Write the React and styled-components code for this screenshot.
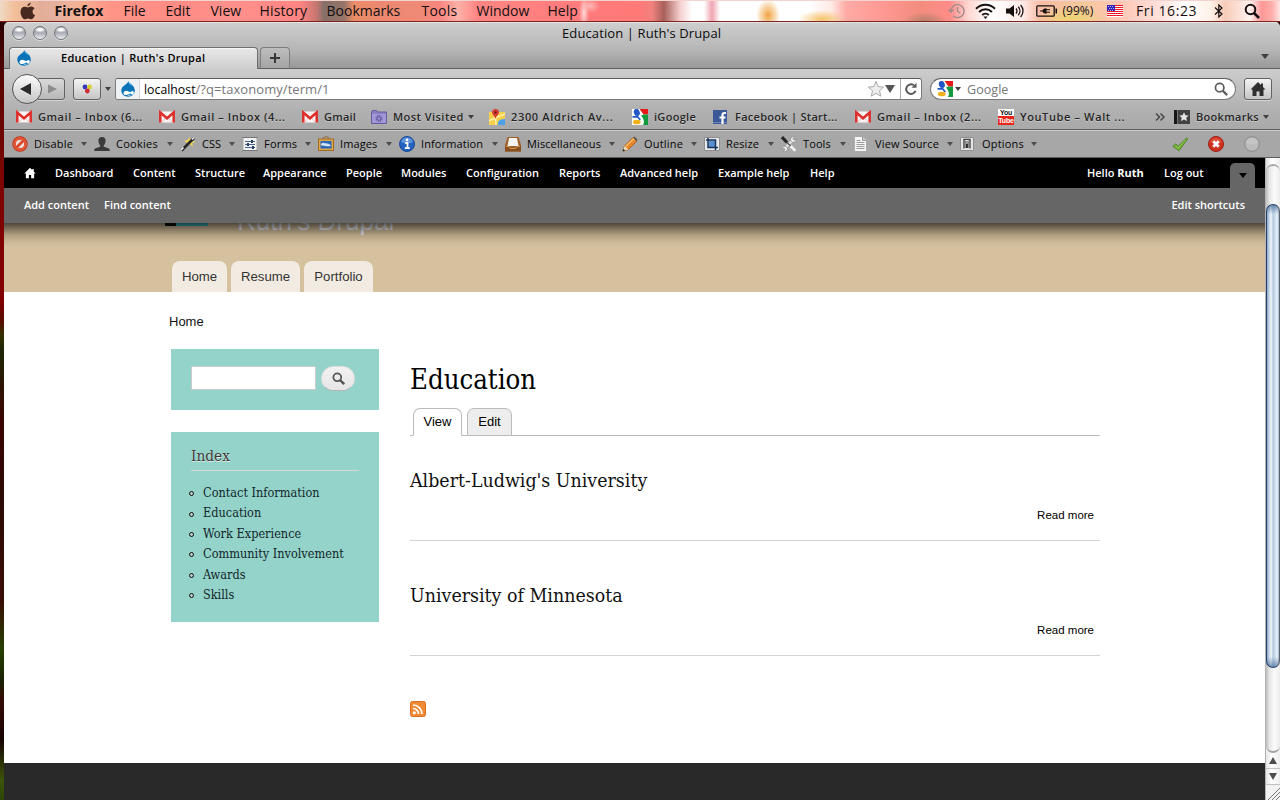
import React from 'react';
import styled, { createGlobalStyle } from 'styled-components';

const Global = createGlobalStyle`
  *, *::before, *::after { box-sizing: border-box; }
  body { margin: 0; overflow: hidden; }
  svg { display: block; flex: none; }
`;

const ui = '"Open Sans", "Noto Sans", sans-serif';
const serif = '"DejaVu Serif Condensed", "DejaVu Serif", serif';
const sans = '"Liberation Sans", Arial, sans-serif';

const Desktop = styled.div`
  width: 1280px;
  height: 800px;
  overflow: hidden;
  display: flex;
  flex-direction: column;
  font-family: ${ui};
  white-space: nowrap;
  background: linear-gradient(180deg, #2a0000 20px, #5e0703 90px, #7d0500 180px, #820000 300px, #5a0a00 320px, #353100 335px, #1d2606 350px, #3c0400 420px, #2c0a05 500px, #3a0d06 600px, #254000 650px, #1a2205 680px, #360a05 700px, #160404 740px, #3c5508 780px, #2d4506 800px);
`;

/* ---- system menu bar ---- */
const MenuBar = styled.header`
  height: 22px;
  flex: none;
  display: flex;
  align-items: center;
  padding: 0 0 1px 20px;
  border-bottom: 1px solid #7c2420;
  border-top: 1px solid #f4d2cd;
  font-size: 14px;
  line-height: 20px;
  color: #141010;
  background:
    radial-gradient(ellipse 10px 7px at 590px 5px, #ffb9b5, transparent),
    radial-gradient(ellipse 5px 18px at 584px 12px, #ffd9d6, transparent),
    radial-gradient(ellipse 12px 16px at 768px 14px, #f0a443, transparent),
    radial-gradient(ellipse 24px 9px at 822px 18px, #f5c368, transparent),
    radial-gradient(ellipse 34px 12px at 1070px 18px, #eed470, transparent),
    radial-gradient(ellipse 22px 9px at 925px 20px, #b5806d, transparent),
    linear-gradient(90deg, #efd9c5 0, #f3c09a 14px, #e3ae98 40px, #e5b09e 58px, #f5b295 78px, #ff9587 110px, #ff8b85 180px, #ff918c 230px, #ff8583 300px, #c97770 316px, #86706a 324px, #967467 344px, #ec8d68 354px, #ec8870 380px, #ee8a76 420px, #f78580 440px, #ffb0a8 458px, #ff8583 478px, #ff7c7c 580px, #ff7977 640px, #f0827e 652px, #a8605a 664px, #f5cfcf 680px, #fff 692px, #fff 704px, #f0a5b2 712px, #fff 720px, #fff 755px, #fff 810px, #ffe8e4 832px, #ffaaa5 846px, #ff9a94 880px, #f28c7e 920px, #ff8c88 950px, #ffd6d1 968px, #fff 990px, #ffecea 1022px, #f8bca4 1040px, #f4c89b 1080px, #ffc6b4 1120px, #ffe1dc 1160px, #fff 1185px, #fff1e9 1210px, #f8cbb8 1225px, #fff2ef 1250px, #ff9794 1262px, #ffafac 1272px, #ffe6e3 1280px);
`;
const MenuItem = styled.span`
  flex: none;
  width: ${(p) => p.$w}px;
  font-weight: ${(p) => (p.$bold ? 700 : 400)};
  font-size: ${(p) => p.$size || 14}px;
  letter-spacing: ${(p) => p.$ls || 0}px;
`;

/* ---- browser window ---- */
const Window = styled.div`
  flex: 1;
  min-height: 0;
  margin-left: 4px;
  display: flex;
  flex-direction: column;
  border-radius: 5px 5px 0 0;
  overflow: hidden;
  background: #a7a7a7;
`;
const Chrome = styled.div`
  flex: none;
  height: 47px;
  padding-top: 1px;
  background: linear-gradient(#cfcfcf, #b5b5b5 60%, #979797);
  box-shadow: inset 0 1px #e4e4e4, inset 0 -1px #5f5f5f;
`;
const TitleBar = styled.div`
  height: 20px;
  display: flex;
  align-items: center;
  padding-left: 8px;
`;
const Lights = styled.div`
  display: flex;
  gap: 7px;
  width: 550px;
`;
const Light = styled.i`
  width: 14px;
  height: 14px;
  border-radius: 50%;
  border: 1px solid #74777f;
  background: radial-gradient(ellipse 6px 3px at 50% 22%, #fff 30%, transparent), linear-gradient(#8c909a, #b0b3bb 55%, #eceef2);
  box-shadow: 0 1px #dcdcdc;
`;
const WindowTitle = styled.div`
  font-size: 13px;
  letter-spacing: 0.11px;
  line-height: 20px;
  color: #0c0c0c;
`;
const TabStrip = styled.div`
  display: flex;
  height: 26px;
  padding-top: 4px;
  padding-left: 5px;
`;
const Tab = styled.div`
  width: 249px;
  height: 22px;
  display: flex;
  align-items: center;
  padding-left: 6px;
  padding-bottom: 1px;
  gap: 29px;
  font-size: 11px;
  font-weight: 600;
  line-height: 18px;
  letter-spacing: 0.29px;
  color: #000;
  border: 1px solid #6f6f6f;
  border-bottom: 0;
  border-radius: 4px 4px 0 0;
  background: linear-gradient(#e9e9e9, #cdcdcd);
  box-shadow: inset 0 1px #f6f6f6;
`;
const NewTab = styled.div`
  width: 30px;
  height: 22px;
  margin-left: 2px;
  display: flex;
  align-items: center;
  justify-content: center;
  border: 1px solid #7d7d7d;
  border-bottom-color: #5f5f5f;
  border-radius: 4px 4px 0 0;
  background: linear-gradient(#bebebe, #a4a4a4);
`;
const TabListArrow = styled.div`
  margin: 7px 11px 0 auto;
`;
const NavBar = styled.div`
  flex: none;
  height: 40px;
  display: flex;
  align-items: center;
  padding-left: 8px;
  background: linear-gradient(#cdcdcd, #b1b1b1);
`;
const BackButton = styled.div`
  width: 30px;
  height: 30px;
  border-radius: 50%;
  border: 1px solid #555;
  background: linear-gradient(#fcfcfc, #c6c6c6);
  display: flex;
  align-items: center;
  justify-content: center;
  padding-right: 2px;
  z-index: 1;
`;
const ToolButton = styled.div`
  width: ${(p) => p.$w}px;
  height: 22px;
  margin-left: ${(p) => p.$ml}px;
  padding-left: ${(p) => p.$pl || 0}px;
  border: 1px solid #626262;
  border-radius: 3px;
  background: linear-gradient(${(p) => (p.$dim ? '#d9d9d9, #b8b8b8' : '#f4f4f4, #c5c5c5')});
  box-shadow: 0 1px #d4d4d4;
  display: flex;
  align-items: center;
  justify-content: center;
`;
const Field = styled.div`
  height: 22px;
  background: #fff;
  border: 1px solid #7b7b7b;
  border-top-color: #5c5c5c;
  border-radius: ${(p) => (p.$round ? 11 : 3)}px;
  width: ${(p) => p.$w}px;
  margin-left: ${(p) => p.$ml}px;
  padding-left: ${(p) => p.$pl || 0}px;
  display: flex;
  align-items: center;
  font-size: 13px;
  line-height: 18px;
  color: #777;
  overflow: hidden;
`;
const SiteBadge = styled.div`
  width: 24px;
  height: 20px;
  padding: 2px 0 0 4px;
  margin-right: 4px;
  background: #eef1f3;
  border-right: 1px solid #d5d5d5;
`;
const Address = styled.div`
  padding-top: 1px;
  letter-spacing: 0.06px;
`;
const Placeholder = styled.div`
  font-size: 12.6px;
  padding-top: 1px;
`;
const Host = styled.span`
  color: #000;
  font-size: 12.3px;
  letter-spacing: 0;
`;
const FieldEnd = styled.div`
  margin-left: auto;
  padding-right: ${(p) => p.$pr || 0}px;
  display: flex;
  align-items: center;
  height: 20px;
`;
const Reload = styled.div`
  width: 21px;
  height: 20px;
  margin-left: 5px;
  border-left: 1px solid #aaa;
  display: flex;
  align-items: center;
  justify-content: center;
`;
const Bar = styled.div`
  flex: none;
  display: flex;
  align-items: center;
  height: ${(p) => p.$h}px;
  padding-left: ${(p) => p.$pl}px;
  padding-bottom: ${(p) => p.$pb || 0}px;
  background: ${(p) => p.$bg};
  border-top: ${(p) => (p.$line ? '1px solid #cdcdcd' : '0')};
  border-bottom: 1px solid #5d5d5d;
`;
const Bookmark = styled.div`
  flex: none;
  width: ${(p) => p.$w}px;
  display: flex;
  align-items: center;
  font-size: 11px;
  line-height: 16px;
  font-weight: 600;
  color: #262626;
  text-shadow: 0 1px rgba(255, 255, 255, 0.35);
  letter-spacing: ${(p) => p.$ls}px;
  svg { margin-right: 6px; }
`;
const DevTool = styled.div`
  flex: none;
  width: ${(p) => p.$w}px;
  display: flex;
  align-items: center;
  font-size: 11px;
  line-height: 16px;
  letter-spacing: ${(p) => p.$ls}px;
  color: #060606;
  svg { margin-right: 6px; }
`;
const Arrow = styled.i`
  flex: none;
  width: 0;
  height: 0;
  border: ${(p) => p.$s || 3}px solid transparent;
  border-top: ${(p) => (p.$s || 3) + 1}px solid ${(p) => p.$color || '#404040'};
  border-bottom: 0;
  margin: ${(p) => p.$m || '0'};
`;

/* ---- page viewport ---- */
const Viewport = styled.div`
  flex: 1;
  min-height: 0;
  display: flex;
`;
const Page = styled.div`
  width: 1261px;
  display: flex;
  flex-direction: column;
  background: #fff;
`;
const Toolbar = styled.div`
  flex: none;
  position: relative;
  z-index: 2;
  color: #fff;
  font-size: 11px;
  line-height: 16px;
  font-weight: 600;
  &::after {
    content: '';
    position: absolute;
    left: 0;
    right: 0;
    top: 100%;
    height: 24px;
    background: linear-gradient(rgba(0, 0, 0, 0.64), rgba(0, 0, 0, 0.4) 25%, rgba(0, 0, 0, 0.17) 52%, rgba(0, 0, 0, 0.05) 78%, transparent);
  }
`;
const AdminMenu = styled.nav`
  height: 30px;
  display: flex;
  align-items: center;
  background: #000;
  padding-left: 20px;
`;
const AdminLink = styled.a`
  flex: none;
  width: ${(p) => p.$w}px;
  b { font-weight: 700; }
`;
const ShortcutToggle = styled.div`
  align-self: flex-end;
  width: 25px;
  height: 25px;
  background: #666;
  border-radius: 5px 5px 0 0;
  display: flex;
  align-items: center;
  justify-content: center;
`;
const Shortcuts = styled.div`
  height: 35px;
  display: flex;
  align-items: center;
  gap: 15px;
  padding: 0 20px 1px;
  background: #666;
  a:last-child { margin-left: auto; }
`;
const SiteHeader = styled.div`
  flex: none;
  height: 69px;
  background: #d6c19e;
  display: flex;
  flex-direction: column;
  justify-content: space-between;
`;
const Branding = styled.div`
  display: flex;
  align-items: flex-end;
  height: 38px;
  margin-top: -24px;
  padding-left: 161px;
`;
const Logo = styled.div`
  width: 43px;
  height: 24px;
  margin-bottom: 11px;
  background: linear-gradient(90deg, #0a0a0a 11px, #3cc3d2 11px);
`;
const SiteName = styled.div`
  margin-left: 29px;
  font: 26px/32px ${sans};
  letter-spacing: 0.05px;
  color: #f4f4ff;
`;
const MainMenu = styled.nav`
  display: flex;
  gap: 4px;
  padding-left: 168px;
`;
const MenuTab = styled.a`
  width: ${(p) => p.$w}px;
  height: 31px;
  text-align: center;
  font: 13.2px/31px ${sans};
  color: #333;
  background: #f2ebe1;
  border-radius: 8px 8px 0 0;
`;
const Breadcrumb = styled.div`
  font: 13px/20px ${sans};
  color: #111;
  padding: 20px 0 0 165px;
  height: 57px;
  flex: none;
`;
const Columns = styled.div`
  display: flex;
  gap: 31px;
  padding-left: 167px;
  flex: 1;
`;
const Sidebar = styled.aside`
  width: 208px;
  display: flex;
  flex-direction: column;
  gap: 22px;
`;
const Block = styled.section`
  height: ${(p) => p.$h}px;
  padding: 0 20px;
  background: #93d3c9;
`;
const SearchForm = styled.div`
  display: flex;
  gap: 5px;
  padding-top: 17px;
`;
const SearchInput = styled.div`
  width: 125px;
  height: 24px;
  background: #fff;
  border: 1px solid #ccc;
`;
const SearchButton = styled.div`
  width: 34px;
  height: 25px;
  border-radius: 13px;
  border: 1px solid #dcdcdc;
  border-bottom-color: #b4b4b4;
  background: linear-gradient(#f1f1f1, #e6e6e6);
  display: flex;
  align-items: center;
  justify-content: center;
`;
const BlockTitle = styled.h2`
  margin: 0;
  height: 39px;
  padding-top: 12px;
  font: 15.3px/24px ${serif};
  color: #3b3b3b;
  text-shadow: 0 1px #e6e6e0;
  border-bottom: 1px solid #d6d6d6;
`;
const IndexList = styled.ul`
  list-style: none;
  margin: 12px 0 0 -2px;
  padding: 0;
`;
const IndexItem = styled.li`
  display: flex;
  align-items: center;
  gap: 9px;
  font: 12.6px/20.4px ${serif};
  color: #14272c;
  &::before {
    content: '';
    flex: none;
    width: 5px;
    height: 5px;
    margin-top: 1px;
    border: 1px solid #111;
    background: #b9ccc8;
    border-radius: 50%;
  }
`;
const Main = styled.main`
  width: 690px;
`;
const PageTitle = styled.h1`
  margin: 0;
  padding-top: 13px;
  height: 59px;
  font: 27.3px/36px ${serif};
  color: #000;
`;
const LocalTabs = styled.div`
  height: 28px;
  display: flex;
  gap: 5px;
  padding-left: 3px;
  box-shadow: inset 0 -1px #bbb;
`;
const LocalTab = styled.a`
  width: ${(p) => p.$w}px;
  height: 28px;
  border: 1px solid #bbb;
  border-bottom-color: ${(p) => (p.$active ? '#fff' : '#bbb')};
  border-radius: 7px 7px 0 0;
  background: ${(p) => (p.$active ? '#fff' : '#ededed')};
  text-align: center;
  font: 13px/25px ${sans};
  color: #000;
`;
const Article = styled.article`
  height: 115px;
  display: flex;
  flex-direction: column;
`;
const Articles = styled.div`
  padding-top: 27px;
`;
const ArticleBody = styled.div`
  height: 78px;
  border-bottom: 1px solid #d3d3d3;
`;
const ArticleTitle = styled.h2`
  margin: 0;
  height: 42px;
  padding-top: 4px;
  font: 19.4px/28px ${serif};
  color: #111;
`;
const ReadMore = styled.div`
  text-align: right;
  padding-right: 6px;
  font: 11.5px/20px ${sans};
  color: #000;
`;
const Feed = styled.div`
  padding-top: 8px;
`;
const Footer = styled.div`
  flex: none;
  height: 37px;
  background: #292929;
`;

/* ---- scroll bar ---- */
const ScrollBar = styled.div`
  width: 15px;
  display: flex;
  flex-direction: column;
  background: #f2f2f2;
  border-left: 1px solid #b4b4b4;
`;
const trackFill = 'linear-gradient(90deg, #bdbdbd, #e6e6e6 25%, #fbfbfb 60%, #ececec)';
const TrackTop = styled.div`
  height: 46px;
  padding-top: 6px;
  background: linear-gradient(90deg, #ddd, #fff 40%, #eee);
  &::before {
    content: '';
    display: block;
    height: 48px;
    border-top: 2px solid #aaa;
    border-radius: 7px 7px 0 0;
    background: ${trackFill};
  }
`;
const Thumb = styled.div`
  height: 464px;
  z-index: 1;
  border: 1px solid #26426c;
  border-right-color: #55606e;
  border-radius: 7px;
  background:
    linear-gradient(180deg, rgba(70, 105, 150, 0.7), transparent 9px, transparent 452px, rgba(70, 105, 150, 0.7)),
    linear-gradient(90deg, #8aa4c4, #c5d6e8 18%, #f1f7fc 34%, #b5c8dd 50%, #c6d8ea 64%, #e9f4fc 84%, #a6b5c6);
`;
const TrackBottom = styled.div`
  height: 92px;
  margin-top: -7px;
  border-bottom: 2px solid #a4a4a4;
  border-radius: 0 0 7px 7px;
  background: ${trackFill};
`;
const ScrollStep = styled.div`
  height: 16px;
  border-bottom: 1px solid #c2c2c2;
  background: linear-gradient(90deg, #e4e4e4, #fff 40%, #eee);
  display: flex;
  align-items: center;
  justify-content: center;
`;

/* ---- icons ---- */
const Svg = ({ w = 16, h = 16, children, ...rest }) => (
  <svg width={w} height={h} viewBox={`0 0 ${w} ${h}`} fill="none" {...rest}>{children}</svg>
);
const Apple = () => (
  <Svg w={16} h={18}>
    <path d="M10.6 0.6c.2 1.9-1.3 3.7-3.1 3.7C7.3 2.5 8.8.8 10.6.6z" fill="#5a3326" />
    <path d="M7.7 5.5c.8 0 1.8-.9 3.3-.9 1.4 0 2.7.7 3.5 1.8-2.9 1.7-2.4 5.5.6 6.7-.6 1.6-2 4.1-3.6 4.1-1.2 0-1.7-.8-3.3-.8s-2.2.8-3.3.8C2.9 17.2.5 13.4.5 9.9c0-3.2 2-5.1 4.2-5.1 1.3 0 2.3.7 3 .7z" fill="#48291f" />
  </Svg>
);
const Clock = () => (
  <Svg w={17} h={16} stroke="#a08c88" strokeWidth="1.4">
    <path d="M3 8a6.500 6.500 0 1 1 2 4.800M.5 6.500 3 9l2.600-2.300M9.500 4v4.200l2.800 2" />
  </Svg>
);
const Wifi = () => (
  <Svg w={21} h={16} stroke="#161010" strokeWidth="2">
    <path d="M1 5.800c5.400-5.300 13.600-5.300 19 0M4.100 9c3.600-3.600 9.200-3.600 12.800 0M7.200 12c1.900-1.800 4.700-1.800 6.600 0" />
    <path d="M8.500 13.500h4l-2 2.500z" fill="#161010" stroke="none" />
  </Svg>
);
const Speaker = () => (
  <Svg w={18} h={14}>
    <path d="M0 4.500h3.500L8 1v12L3.500 9.500H0z" fill="#161010" />
    <path d="M10 4.500c1.200 1.500 1.200 3.500 0 5M12.300 2.800c2.200 2.500 2.200 6 0 8.400M14.600 1c3.200 3.500 3.200 8.500 0 12" stroke="#161010" strokeWidth="1.3" />
  </Svg>
);
const Battery = () => (
  <Svg w={22} h={12}>
    <rect x=".8" y=".8" width="17.4" height="10.4" rx="1" stroke="#161010" strokeWidth="1.3" />
    <path d="M19.500 3.500H21v5h-1.500zM4 5.500h2.500c.5-1.500 2-2.200 4-2.200v1h3.500v1h-3.500v1.400H14v1h-3.500v1c-2 0-3.500-.6-4-2.200H4z" fill="#161010" />
  </Svg>
);
const Flag = () => (
  <Svg w={16} h={12} shapeRendering="crispEdges">
    <path fill="#fff" d="M0 0h16v12H0z" />
    <path fill="#f01828" d="M0 0h16v1H0zM0 2h16v1H0zM0 4h16v1H0zM0 6h16v1H0zM0 8h16v1H0zM0 10h16v1H0z" />
    <path fill="#2f21b8" d="M0 0h8v6H0z" />
    <path fill="#b9b4ee" d="M1 1h1v1H1zM3 1h1v1H3zM5 1h1v1H5zM2 3h1v1H2zM4 3h1v1H4zM6 3h1v1H6zM1 5h1v1H1zM3 5h1v1H3zM5 5h1v1H5z" />
  </Svg>
);
const Bluetooth = () => (
  <Svg w={10} h={14} stroke="#161010" strokeWidth="1.2">
    <path d="M1 3.500 8 10l-3.200 3V1L8 4 1 10.500" />
  </Svg>
);
const Magnifier = ({ s = 16, c = '#161010', sw = 2 }) => (
  <svg width={s} height={s} viewBox="0 0 16 16" fill="none" stroke={c} strokeWidth={sw}>
    <circle cx="6.500" cy="6.500" r="4.800" />
    <path d="m10 10 5 5" strokeWidth={sw * 1.3} />
  </svg>
);
const Druplicon = () => (
  <Svg>
    <path d="M8.300.3C8.800 2.600 14.800 4 14.800 9.600c0 3.700-3 6.200-6.700 6.200S1.300 13.200 1.300 9.600C1.300 4.700 7 4.200 8.300.3z" fill="#0a73b8" />
    <path d="M8.300.3c.4 1.700 3.400 2.700 5 5-2-1-3-1.300-4.400-2.600z" fill="#55aee4" />
    <path d="M3.500 12.300c0-1.600 1.300-2.500 2.800-2.500 1.800 0 2.800 1.300 3.700 1.300.8 0 1.500-1.200 2.600-1.200.8 0 1.200.8 1.200 1.700 0 1-.7 2.100-1.500 2.100-1 0-1.500-1.100-2.200-1.100-.9 0-1.900 1.500-3.700 1.500-1.700 0-2.900-.5-2.900-1.800z" fill="#fff" />
    <path d="M7.800 14.600c.9-.6 2-.6 2.700.1" stroke="#fff" strokeWidth=".8" />
  </Svg>
);
const Gmail = () => (
  <Svg>
    <path d="M1 2.500h14v11H1z" fill="#fbf3f2" />
    <path d="m3 13 4-4.500M13 13 9 8.500" stroke="#dfb9b6" strokeWidth=".8" />
    <path d="M1.300 13.500V3.500L8 9.300l6.700-5.800v10" stroke="#de2f2c" strokeWidth="2.500" />
  </Svg>
);
const Folder = () => (
  <Svg>
    <path d="M.5 14.500V3l1-1.500h4l1 1.500h9v11.500z" fill="#8d80c4" stroke="#655a9c" />
    <path d="M1 5h14v9H1z" fill="#a298d8" />
    <circle cx="8" cy="9.500" r="2.700" stroke="#66599f" strokeWidth="1.600" strokeDasharray="1.200 .9" />
    <circle cx="8" cy="9.500" r="1.800" stroke="#66599f" />
  </Svg>
);
const MapPin = () => (
  <Svg>
    <path d="M0 3h16v13H0z" fill="#f8cf4d" />
    <path d="M9 16c-1-4 2-6 7-6v6z" fill="#4f9fe8" />
    <path d="m0 12 8-4 8-3M7 16l-.5-7" stroke="#fdf0a8" strokeWidth="1.600" />
    <path d="M6.500 10C6 7 3 5.500 3 3.500a3.500 3.500 0 0 1 7 0C10 5.500 7 7 6.500 10z" fill="#d83c32" />
    <circle cx="6.500" cy="3.500" r="1.200" fill="#741a15" />
  </Svg>
);
const GoogleG = () => (
  <Svg>
    <path fill="#fff" d="M0 0h16v16H0z" />
    <path fill="#e61a17" d="M7.500 0H16v5.500h-4.500C10.500 4 9 2 7.500 0z" />
    <path fill="#119a3e" d="M9 6.500c1-.2 2-.6 2.500-1H16V16h-5c1.500-2.500 1.500-5-2-9.500z" />
    <ellipse cx="4.800" cy="3.500" rx="2.900" ry="3.600" transform="rotate(-20 4.800 3.500)" fill="#2357c8" />
    <path d="M.5 7.800h5.200L8.200 11" stroke="#2357c8" strokeWidth="1.700" />
    <ellipse cx="4.800" cy="13" rx="3.900" ry="2.300" fill="#f0b11b" />
  </Svg>
);
const Facebook = () => (
  <Svg>
    <path fill="#3b5998" d="M0 1h14v14H0z" />
    <path fill="#6d84b4" d="M0 13h14v1H0z" />
    <path d="M13 4h-1.500c-1.500 0-2 .7-2 2.200V15M6.500 8.500h6" stroke="#fff" strokeWidth="2.200" />
  </Svg>
);
const YtBox = styled.div`
  flex: none;
  width: 16px;
  height: 16px;
  margin-right: 6px;
  background: linear-gradient(#fff 7px, #e8261b 7px);
  font: 700 7px/8px "Liberation Sans", sans-serif;
  letter-spacing: -0.2px;
  text-align: center;
  text-shadow: none;
  color: #111;
  span { display: block; color: #fff; }
`;
const BookIcon = () => (
  <Svg>
    <path fill="#424242" d="M1 1h15v14H1z" />
    <path fill="#161616" d="M0 1h3.500v14H0z" />
    <path d="M3.500 1v14" stroke="#777" />
    <path d="m10 3.300 1.400 2.900 3.200.4-2.300 2.200.6 3.200L10 10.500 7.100 12l.6-3.200-2.300-2.200 3.200-.4z" fill="#e6e6e6" />
  </Svg>
);
const Disable = () => (
  <Svg>
    <circle cx="8" cy="8" r="7.700" fill="#bd2c17" />
    <circle cx="8" cy="8" r="5.500" fill="#f0e3dc" stroke="#e2583a" strokeWidth="2.800" />
    <path d="m4.200 11.800 7.600-7.600" stroke="#d9482b" strokeWidth="2.800" />
  </Svg>
);
const Person = () => (
  <Svg>
    <path d="M8 1c2.500 0 3.600 1.600 3.600 3.800 0 1.800-.7 3.600-1.800 4.500v1.500l4.700 1.400c1 .4 1.300 1.300 1.300 2.800H.2c0-1.500.3-2.400 1.300-2.800l4.700-1.400V9.300C5.100 8.400 4.400 6.600 4.400 4.800 4.400 2.600 5.500 1 8 1z" fill="#3b3b3b" />
  </Svg>
);
const Wand = () => (
  <Svg>
    <path d="m9 1 1 3 3-2-1 3 4 1-4 1 1 4-3-3-3 2 1-3-4-2 4-1z" fill="#f3d84b" />
    <path d="M1.500 14.500 14 2" stroke="#262626" strokeWidth="2.600" />
    <path d="M1 14 3.500 11.500M12 3.500 14 1.500" stroke="#ececec" strokeWidth="1.600" />
  </Svg>
);
const Forms = () => (
  <Svg>
    <path fill="#f0f1f2" d="M1.500 1h13v14h-13z" />
    <path d="M.5 1.500h15M.5 14.500h15" stroke="#777" />
    <path d="M3 5.500h10M3 8.500h10M3 11.500h10" stroke="#4b6387" />
    <path d="M9 4h2v3H9zM5 7h2v3H5zM10 10h2v3h-2z" fill="#263f68" />
  </Svg>
);
const Picture = () => (
  <Svg>
    <path d="m4 2.500 4-2 4 2" stroke="#8c6b3a" />
    <path fill="#a36c20" d="M0 2.500h16V15H0z" />
    <path fill="#dba850" d="M1 3.500h14V14H1z" />
    <path fill="#2d67b5" d="M2.500 5h11v7.500h-11z" />
    <path fill="#cfe4f8" d="M3 8c2-2 3-1 4-.5 1.500-.5 4 .5 5.500 1.500v1C9 11 6 9 3 9.500z" />
  </Svg>
);
const Info = () => (
  <Svg>
    <circle cx="8" cy="8" r="7.500" fill="#2462bf" stroke="#1a4a97" />
    <path d="M2 6a6.300 6.300 0 0 1 12 0c-4 2-8 2-12 0z" fill="#5d93dd" />
    <path d="M6.300 7h2.200v5M5.800 12.200h5" stroke="#fff" strokeWidth="1.800" />
    <circle cx="8" cy="3.900" r="1.400" fill="#fff" />
  </Svg>
);
const Tray = () => (
  <Svg>
    <path d="M2.500 1h11L16 9v6.500H0V9z" fill="#a0622a" />
    <path d="M4 2h8l1.500 8h-11z" fill="#f4f4f2" />
    <path d="M0 10h4.500l1 2h5l1-2H16v5.500H0z" fill="#8a4f1e" />
    <path d="M1 10.500h3.200l1 2h5.600l1-2H15" stroke="#cf9455" />
  </Svg>
);
const Pencil = () => (
  <Svg>
    <path d="m1 15 1.500-5L11 1.500 14.800 5 6.500 13.500z" fill="#e8872b" stroke="#9d5418" strokeWidth=".8" />
    <path d="m3.500 10.500 9-8.500" stroke="#ffbd66" strokeWidth="1.300" />
    <path d="m1 15 1.500-5 4 3.500z" fill="#ead9ba" />
    <path d="m.5 15.500.8-2.500 2 1.600z" fill="#222" />
    <path d="m11 1.500 1.500-1 3 3-.7 1.500z" fill="#555" />
  </Svg>
);
const Resize = () => (
  <Svg>
    <path fill="#e8eaec" d="M.5 1.500h15v13H.5z" stroke="#8e8e8e" />
    <path fill="#5c8fd0" d="M4.500 4.500h7v7h-7z" />
    <path d="M4 2v9.500h10M2 4h9.500v10" stroke="#17335a" strokeWidth="1.500" />
  </Svg>
);
const Wrench = () => (
  <Svg>
    <path d="m4 12 7.500-7.500" stroke="#e4e4e4" strokeWidth="2.400" />
    <path d="M10.500 1.500c-2 2-.5 5 2 4.700 1.600-.2 3-1.500 3-3l-2.300 1-1.300-1.500L13.500.7c-1.200-.3-2.200 0-3 .8zM5.200 10.500c-2-.6-4 .4-4.500 2.500L3 12.200l1 1.500-1.500 2c2 .6 4.200-1 4-3.200z" fill="#eee" stroke="#777" strokeWidth=".5" />
    <path d="m1 1 5 5.500" stroke="#252525" strokeWidth="3" />
    <path d="m6 6.500 4 4" stroke="#555" strokeWidth="1.300" />
    <path d="m9.500 10 4.800 4.700" stroke="#f0f0f0" strokeWidth="2.800" />
  </Svg>
);
const Source = () => (
  <Svg>
    <path d="M1.500.5h8l4 4v11h-12z" fill="#f5f5f5" stroke="#aaa" />
    <path d="M9.500.5v4h4" fill="#ccc" stroke="#999" />
    <path d="M3.500 4.500h4M3.500 6.500h8M3.500 8.500h8M3.500 10.500h8M3.500 12.500h8" stroke="#9b9b9b" />
  </Svg>
);
const Options = () => (
  <Svg>
    <path d="M.5 1.500h13v13H.5z" fill="#e4e4e4" stroke="#8e8e8e" />
    <path d="M4 12.500V3.500h6v9" stroke="#444" strokeWidth="1.400" />
    <path d="M5.500 5h3v7h-3z" fill="#333" />
    <path d="M6.500 4h1v4h-1z" fill="#fff" />
  </Svg>
);
const Check = () => (
  <Svg>
    <path d="m.8 10.300 3-2.500 2.400 2.400L14.500 2l1.300.8-8.800 12z" fill="#72b03a" stroke="#4a7d20" strokeWidth=".8" />
    <path d="m3.500 9.800 2.700 2.300 7.300-8" stroke="#8cc452" strokeWidth="1" />
  </Svg>
);
const ErrorBadge = () => (
  <Svg>
    <circle cx="8" cy="8" r="7.500" fill="#cf3220" stroke="#9b1d10" />
    <path d="M2 6.500a6.200 6.200 0 0 1 12 0c-4 1.500-8 1.500-12 0z" fill="#dc4c38" />
    <path d="m5.300 5.300 5.400 5.400M10.700 5.300l-5.400 5.400" stroke="#fff" strokeWidth="2.700" />
  </Svg>
);
const GreyBadge = () => (
  <Svg>
    <circle cx="8" cy="8" r="7.300" fill="#bcbcbc" stroke="#898989" />
    <path d="M2 7a6.200 6.200 0 0 1 12 0c-4 1.500-8 1.500-12 0z" fill="#c6c6c6" />
  </Svg>
);
const HouseIcon = ({ s = 16, c = '#2f2f2f' }) => (
  <svg width={s} height={s} viewBox="0 0 16 16"><path d="M8 1 .5 8.600h2V15h4v-4.500h3V15h4V8.600h2L13 6V2.500h-2v1.600z" fill={c} /></svg>
);

const menus = [['File', 42], ['Edit', 45], ['View', 49], ['History', 67, 0.15], ['Bookmarks', 95], ['Tools', 55, 0.2], ['Window', 71], ['Help', 400]];
const bookmarks = [
  [Gmail, 'Gmail – Inbox (6...', 143, 0.57],
  [Gmail, 'Gmail – Inbox (4...', 143, 0.57],
  [Gmail, 'Gmail', 69, 0.2],
  [Folder, 'Most Visited', 118, 0.46, true],
  [MapPin, '2300 Aldrich Av...', 143, 0.66],
  [GoogleG, 'iGoogle', 81, 0.3],
  [Facebook, 'Facebook | Start...', 142, 0.28],
  [Gmail, 'Gmail – Inbox (2...', 143, 0.57],
];
const tools = [
  [Disable, 'Disable', 82, 0.17], [Person, 'Cookies', 86, 0.27], [Wand, 'CSS', 62, 0], [Forms, 'Forms', 76, 0.2],
  [Picture, 'Images', 81, 0.1], [Info, 'Information', 106, 0.1], [Tray, 'Miscellaneous', 117, 0.11], [Pencil, 'Outline', 82, 0.2],
  [Resize, 'Resize', 77, 0.1], [Wrench, 'Tools', 72, 0.1], [Source, 'View Source', 107, 0.16], [Options, 'Options', 212, 0.2],
];
const adminLinks = [['Dashboard', 78], ['Content', 62], ['Structure', 68], ['Appearance', 83], ['People', 55], ['Modules', 65], ['Configuration', 93], ['Reports', 61], ['Advanced help', 98], ['Example help', 92], ['Help', 277]];
const indexLinks = ['Contact Information', 'Education', 'Work Experience', 'Community Involvement', 'Awards', 'Skills'];

export default function App() {
  return (
    <Desktop>
      <Global />
      <MenuBar>
        <MenuItem $w={34.5}><Apple /></MenuItem>
        <MenuItem $w={69} $bold>Firefox</MenuItem>
        {menus.map(([t, w, ls]) => <MenuItem key={t} $w={w} $ls={ls}>{t}</MenuItem>)}
        <MenuItem $w={27}><Clock /></MenuItem>
        <MenuItem $w={31}><Wifi /></MenuItem>
        <MenuItem $w={30}><Speaker /></MenuItem>
        <MenuItem $w={27}><Battery /></MenuItem>
        <MenuItem $w={44.5} $size={12}>(99%)</MenuItem>
        <MenuItem $w={29}><Flag /></MenuItem>
        <MenuItem $w={78} $ls={0.6}>Fri 16:23</MenuItem>
        <MenuItem $w={30}><Bluetooth /></MenuItem>
        <Magnifier />
      </MenuBar>
      <Window>
        <Chrome>
          <TitleBar>
            <Lights><Light /><Light /><Light /></Lights>
            <WindowTitle>Education | Ruth's Drupal</WindowTitle>
          </TitleBar>
          <TabStrip>
            <Tab><Druplicon />Education | Ruth's Drupal</Tab>
            <NewTab><Svg w={12} h={12} stroke="#3a3a3a" strokeWidth="2"><path d="M6 1v10M1 6h10" /></Svg></NewTab>
            <TabListArrow><Arrow as="div" $s={4} /></TabListArrow>
          </TabStrip>
        </Chrome>
        <NavBar>
          <BackButton><Svg w={12} h={12}><path d="M0 6 11 0v12z" fill="#2b2b2b" /></Svg></BackButton>
          <ToolButton $w={29} $ml={-6} $pl={3} $dim><Svg w={9} h={10}><path d="M9 5 0 .5v9z" fill="#8d8d8d" /></Svg></ToolButton>
          <ToolButton $w={28} $ml={8}>
            <Svg w={12} h={12}><circle cx="4" cy="4" r="2.400" fill="#3737bd" /><circle cx="8.500" cy="4" r="2.400" fill="#d9cf2e" /><circle cx="6.300" cy="8" r="2.400" fill="#c82f36" /></Svg>
          </ToolButton>
          <Arrow $m="0 5px 0 4px" />
          <Field $w={807} $ml={-1}>
            <SiteBadge><Druplicon /></SiteBadge>
            <Address><Host>localhost</Host>/?q=taxonomy/term/1</Address>
            <FieldEnd>
              <Svg w={18} h={18}><path d="m9 1.500 2.200 5.100 5.500.5-4.200 3.600 1.300 5.500L9 13.300l-4.800 2.900 1.300-5.500-4.200-3.600 5.500-.5z" fill="#eee" stroke="#a9a9a9" /></Svg>
              <Svg w={10} h={8}><path d="M0 0h10L5 8z" fill="#555" /></Svg>
              <Reload><Svg w={14} h={14}><path d="M11.500 8.800A4.800 4.800 0 1 1 9.800 3.200" stroke="#5a5a5a" strokeWidth="2" /><path d="M7.500 5.800h5V.8z" fill="#5a5a5a" /></Svg></Reload>
            </FieldEnd>
          </Field>
          <Field $w={306} $ml={8} $pl={6} $round>
            <GoogleG />
            <Arrow $s={3} $m="0 6px 0 2px" />
            <Placeholder>Google</Placeholder>
            <FieldEnd $pr={7}><Magnifier s={14} c="#5c5c5c" /></FieldEnd>
          </Field>
          <ToolButton $w={28} $ml={8}><HouseIcon /></ToolButton>
        </NavBar>
        <Bar $h={21} $pl={12} $pb={4} $bg="linear-gradient(#b1b1b1, #a9a9a9)">
          {bookmarks.map(([Icon, t, w, ls, arrow], i) => (
            <Bookmark key={i} $w={w} $ls={ls}><Icon />{t}{arrow && <Arrow $m="0 0 0 4px" />}</Bookmark>
          ))}
          <Bookmark $w={157} $ls={0.63}><YtBox>You<span>Tube</span></YtBox>YouTube – Walt ...</Bookmark>
          <Svg w={19} h={10} stroke="#4a4a4a" strokeWidth="1.500"><path d="m1 1.500 3.500 3.500L1 8.500M5.500 1.500 9 5l-3.500 3.500" /></Svg>
          <Bookmark $w={100} $ls={0.3}><BookIcon />Bookmarks<Arrow $m="0 0 0 4px" /></Bookmark>
        </Bar>
        <Bar $h={28} $pl={8} $bg="#a7a7a7" $line>
          {tools.map(([Icon, t, w, ls]) => (
            <DevTool key={t} $w={w} $ls={ls}><Icon />{t}<Arrow $color="#4c4c4c" $m={t === 'Options' ? '0 0 0 7px' : '0 7px 0 auto'} /></DevTool>
          ))}
          <DevTool $w={36}><Check /></DevTool>
          <DevTool $w={36}><ErrorBadge /></DevTool>
          <GreyBadge />
        </Bar>
        <Viewport>
          <Page>
            <Toolbar>
              <AdminMenu>
                <AdminLink $w={31}><HouseIcon s={12} c="#fff" /></AdminLink>
                {adminLinks.map(([t, w]) => <AdminLink key={t} $w={w}>{t}</AdminLink>)}
                <AdminLink $w={77}>Hello <b>Ruth</b></AdminLink>
                <AdminLink $w={66}>Log out</AdminLink>
                <ShortcutToggle><Arrow $s={4} $color="#000" /></ShortcutToggle>
              </AdminMenu>
              <Shortcuts><a>Add content</a><a>Find content</a><a>Edit shortcuts</a></Shortcuts>
            </Toolbar>
            <SiteHeader>
              <Branding><Logo /><SiteName>Ruth's Drupal</SiteName></Branding>
              <MainMenu><MenuTab $w={55}>Home</MenuTab><MenuTab $w={69}>Resume</MenuTab><MenuTab $w={69}>Portfolio</MenuTab></MainMenu>
            </SiteHeader>
            <Breadcrumb>Home</Breadcrumb>
            <Columns>
              <Sidebar>
                <Block $h={61}>
                  <SearchForm><SearchInput /><SearchButton><Magnifier s={13} c="#555" sw={2.2} /></SearchButton></SearchForm>
                </Block>
                <Block $h={190}>
                  <BlockTitle>Index</BlockTitle>
                  <IndexList>{indexLinks.map((t) => <IndexItem key={t}>{t}</IndexItem>)}</IndexList>
                </Block>
              </Sidebar>
              <Main>
                <PageTitle>Education</PageTitle>
                <LocalTabs><LocalTab $w={49} $active>View</LocalTab><LocalTab $w={45}>Edit</LocalTab></LocalTabs>
                <Articles>
                  {["Albert-Ludwig's University", 'University of Minnesota'].map((t) => (
                    <Article key={t}>
                      <ArticleBody><ArticleTitle>{t}</ArticleTitle><ReadMore>Read more</ReadMore></ArticleBody>
                    </Article>
                  ))}
                </Articles>
                <Feed>
                  <Svg>
                    <rect x=".5" y=".5" width="15" height="15" rx="2" fill="#f08a35" stroke="#d76d20" />
                    <circle cx="4.300" cy="11.700" r="1.500" fill="#fff" />
                    <path d="M3 7.500A5.500 5.500 0 0 1 8.500 13M3 4a9 9 0 0 1 9 9" stroke="#fff" strokeWidth="1.700" />
                  </Svg>
                </Feed>
              </Main>
            </Columns>
            <Footer />
          </Page>
          <ScrollBar>
            <TrackTop />
            <Thumb />
            <TrackBottom />
            <ScrollStep><Svg w={8} h={7}><path d="M4 0 8 7H0z" fill="#4c4c4c" /></Svg></ScrollStep>
            <ScrollStep><Svg w={8} h={7}><path d="M4 7 8 0H0z" fill="#4c4c4c" /></Svg></ScrollStep>
            <Svg w={14} h={15} stroke="#777"><path d="m2 15 12-12M6 15l8-8M10 15l4-4" /></Svg>
          </ScrollBar>
        </Viewport>
      </Window>
    </Desktop>
  );
}
